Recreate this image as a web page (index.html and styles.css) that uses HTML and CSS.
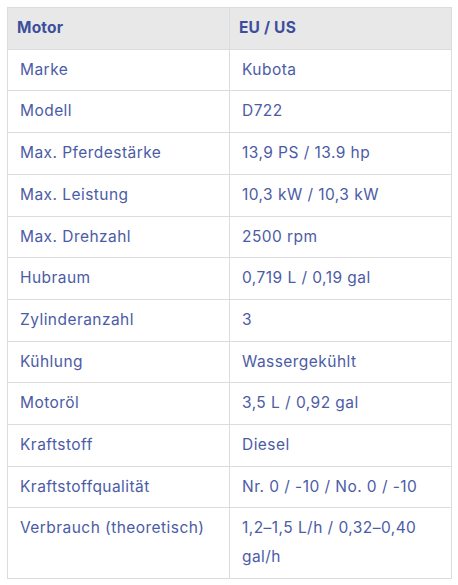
FILE: index.html
```html
<!DOCTYPE html>
<html lang="de">
<head>
<meta charset="utf-8">
<link rel="stylesheet" href="styles.css">
</head>
<body>
<div class="wrap">
<table class="spec">
  <thead>
    <tr><th>Motor</th><th>EU / US</th></tr>
  </thead>
  <tbody>
    <tr><td>Marke</td><td>Kubota</td></tr>
    <tr><td>Modell</td><td>D722</td></tr>
    <tr><td>Max. Pferdestärke</td><td>13,9 PS / 13.9 hp</td></tr>
    <tr><td>Max. Leistung</td><td>10,3 kW / 10,3 kW</td></tr>
    <tr><td>Max. Drehzahl</td><td>2500 rpm</td></tr>
    <tr><td>Hubraum</td><td>0,719 L / 0,19 gal</td></tr>
    <tr><td>Zylinderanzahl</td><td>3</td></tr>
    <tr><td>Kühlung</td><td>Wassergekühlt</td></tr>
    <tr><td>Motoröl</td><td>3,5 L / 0,92 gal</td></tr>
    <tr><td>Kraftstoff</td><td>Diesel</td></tr>
    <tr><td>Kraftstoffqualität</td><td>Nr. 0 / -10 / No. 0 / -10</td></tr>
    <tr><td>Verbrauch (theoretisch)</td><td>1,2–1,5 L/h / 0,32–0,40 gal/h</td></tr>
  </tbody>
</table>
</div>
</body>
</html>
```
FILE: styles.css
```css
html, body {
  margin: 0;
  padding: 0;
  background: #ffffff;
}
.wrap {
  padding: 7px;
}
.spec {
  width: 445px;
  border-collapse: collapse;
  table-layout: fixed;
  font-family: Inter, "Liberation Sans", sans-serif;
  font-size: 15.5px;
  letter-spacing: 0.45px;
  line-height: 28.7px;
  color: #4b5ca6;
}
.spec th, .spec td {
  border: 1px solid #dcdcdc;
  text-align: left;
  vertical-align: top;
  width: 50%;
}
.spec th {
  background: #e8e8e8;
  color: #3d4f9c;
  font-weight: 700;
  letter-spacing: 0.2px;
  padding: 6px 9px;
}
.spec td {
  padding: 6px 12px;
}
```
